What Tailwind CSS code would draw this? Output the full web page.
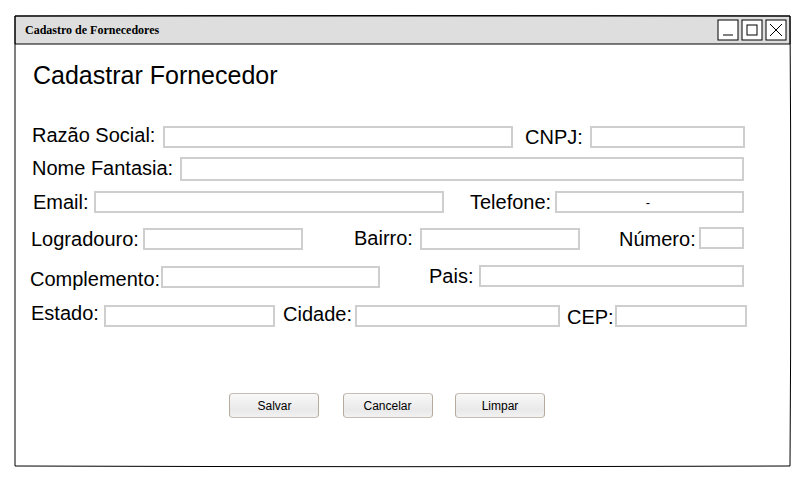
<!DOCTYPE html>
<html lang="pt-BR">
<head>
<meta charset="utf-8">
<title>Cadastro de Fornecedores</title>
<script src="https://cdn.jsdelivr.net/npm/@tailwindcss/browser@4"></script>
</head>
<body class="bg-white">
<main class="relative w-[805px] h-[480px] overflow-hidden pt-4 pl-[15px] font-['Liberation_Sans',Arial,sans-serif] text-black">
  <!-- Window outline, drawn slightly bowed -->
  <svg class="absolute inset-0 pointer-events-none" width="805" height="480" fill="none" stroke="#000">
    <path d="M15 16L209 15.6L403 15.5L597 15.6L790 16L790.6 128L790.7 241L790.6 354L790 466L597 466.5L403 466.7L209 466.5L15 466Z"/>
    <path d="M15 16H790V44H15Z"/>
  </svg>

  <header class="flex items-start w-[775px] h-7 bg-[#dedede]">
    <h1 class="pl-2.5 pt-1.5 leading-4 text-[12px] font-bold font-['Liberation_Serif','Times_New_Roman',serif]">Cadastro de Fornecedores</h1>
    <svg class="relative ml-auto mr-[3px] mt-[3px]" width="70" height="22" fill="#fff" stroke="#000">
      <rect x="1" y="1" width="20" height="20"/>
      <path d="M6 16H16"/>
      <rect x="25" y="1" width="20" height="20"/>
      <rect x="30" y="6" width="10" height="10"/>
      <rect x="49" y="1" width="20" height="20"/>
      <path d="M53 5L65 17M65 5L53 17" shape-rendering="crispEdges"/>
    </svg>
  </header>

  <h2 class="pt-4 pl-[18px] leading-[30px] text-[25px]">Cadastrar Fornecedor</h2>

  <form class="grid grid-rows-[33px_34px_36px_38px_37px_92px] mt-[33px] pl-3.5 text-[20px] leading-6 whitespace-nowrap">
    <div class="flex items-start">
      <label class="w-[134px] pl-[3px]">Razão Social:</label>
      <input class="mt-[3px] w-[350px] h-[22px] border-2 border-[#cecece]">
      <label class="mt-0.5 w-[77px] pl-3">CNPJ:</label>
      <input class="mt-[3px] w-[155px] h-[22px] border-2 border-[#cecece]">
    </div>
    <div class="flex items-start">
      <label class="w-[151px] pl-[3px]">Nome Fantasia:</label>
      <input class="mt-px w-[564px] h-6 border-2 border-[#cecece]">
    </div>
    <div class="flex items-start">
      <label class="w-[65px] pl-1">Email:</label>
      <input class="mt-px w-[350px] h-[22px] border-2 border-[#cecece]">
      <label class="w-[111px] pl-[26px]">Telefone:</label>
      <input value="-" class="mt-px w-[189px] h-[22px] border-2 border-[#cecece] text-[13px] text-center pr-[3px] pt-0.5">
    </div>
    <div class="flex items-start">
      <label class="mt-px w-[114px] pl-0.5">Logradouro:</label>
      <input class="mt-0.5 w-40 h-[22px] border-2 border-[#cecece]">
      <label class="w-[117px] pl-[51px]">Bairro:</label>
      <input class="mt-0.5 w-40 h-[22px] border-2 border-[#cecece]">
      <label class="mt-px w-[119px] pl-[39px]">Número:</label>
      <input class="mt-px w-[45px] h-[22px] border-2 border-[#cecece]">
    </div>
    <div class="flex items-start">
      <label class="mt-[3px] w-[132px] pl-px">Complemento:</label>
      <input class="mt-0.5 w-[219px] h-[22px] border-2 border-[#cecece]">
      <label class="w-[99px] pl-[49px]">Pais:</label>
      <input class="mt-px w-[265px] h-[22px] border-2 border-[#cecece]">
    </div>
    <div class="flex items-start">
      <label class="w-[75px] pl-0.5">Estado:</label>
      <input class="mt-1 w-[171px] h-[22px] border-2 border-[#cecece]">
      <label class="mt-px w-20 pl-2">Cidade:</label>
      <input class="mt-1 w-[205px] h-[22px] border-2 border-[#cecece]">
      <label class="mt-1 w-[55px] pl-[7px]">CEP:</label>
      <input class="mt-1 w-[132px] h-[22px] border-2 border-[#cecece]">
    </div>
    <div class="flex gap-[22px] pl-[200px] text-[12px]">
      <button type="button" class="w-[90px] h-[25px] rounded-[4px] border border-x-[#b5aa9c] border-y-[#c6beb2] pl-px bg-linear-to-b from-[#f8f8f8] via-[#e9e9e9] via-70% to-[#f2f2f2]">Salvar</button>
      <button type="button" class="ml-0.5 w-[90px] h-[25px] rounded-[4px] border border-x-[#b5aa9c] border-y-[#c6beb2] pr-px bg-linear-to-b from-[#f8f8f8] via-[#e9e9e9] via-70% to-[#f2f2f2]">Cancelar</button>
      <button type="button" class="w-[90px] h-[25px] rounded-[4px] border border-x-[#b5aa9c] border-y-[#c6beb2] bg-linear-to-b from-[#f8f8f8] via-[#e9e9e9] via-70% to-[#f2f2f2]">Limpar</button>
    </div>
  </form>
</main>
</body>
</html>
